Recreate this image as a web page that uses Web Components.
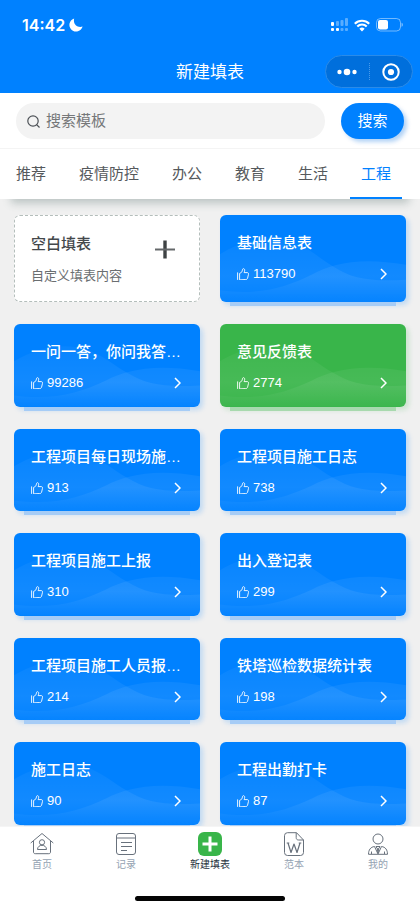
<!DOCTYPE html>
<html lang="zh-CN">
<head>
<meta charset="utf-8">
<meta name="viewport" content="width=device-width, initial-scale=1">
<title>新建填表</title>
<style>
  body { margin: 0; font-family: "Liberation Sans", "Noto Sans CJK SC", sans-serif; background: #f0f0f0; }
</style>
</head>
<body>
<form-app></form-app>
<script>
const base = `<style>
  *, *::before, *::after { box-sizing: border-box; }
  button { font: inherit; color: inherit; background: none; border: 0; padding: 0; margin: 0; cursor: pointer; }
  svg { display: block; }
</style>`;

function define(name, html, setup) {
  customElements.define(name, class extends HTMLElement {
    constructor() {
      super();
      const t = document.createElement('template');
      t.innerHTML = base + html;
      this.attachShadow({ mode: 'open' }).append(t.content.cloneNode(true));
    }
    connectedCallback() { if (setup) setup(this, this.shadowRoot); }
  });
}

define('status-bar', `<style>
  :host { display: flex; align-items: center; height: 50px; padding: 0 17px 0 22px; color: #fff; }
  time { font: 600 16px/20px Inter, "Liberation Sans", sans-serif; }
  .moon { margin-left: 4px; }
  .right { margin-left: auto; display: flex; align-items: center; gap: 6px; }
</style>
<time>14:42</time>
<svg class="moon" width="14" height="14" viewBox="0 0 14 14"><path fill="#fff" d="M5.200.5A6.700 6.700 0 1 0 13.600 8.600C9 10.500 3.600 6.400 5.200.5z"/></svg>
<div class="right">
  <svg width="17" height="14" viewBox="0 0 17 14" fill="#fff">
    <rect y="4" width="3" height="4" rx="1"/><rect y="10" width="3" height="3" rx="1"/><rect x="5" y="10" width="3" height="3" rx="1"/>
    <g opacity=".35"><rect x="5" y="3" width="3" height="5" rx="1"/><rect x="9.500" y="2" width="3" height="6" rx="1"/><rect x="14" y="0" width="3" height="8" rx="1"/><rect x="9.500" y="10" width="3" height="3" rx="1"/><rect x="14" y="10" width="3" height="3" rx="1"/></g>
  </svg>
  <svg width="16" height="13" viewBox="0 0 16 13" fill="none" stroke="#fff" stroke-width="2.1"><path d="M.8 4.700a10.300 10.300 0 0 1 14.400 0M3.300 7.500a6.600 6.600 0 0 1 9.400 0"/><path fill="#fff" stroke="none" d="M5.400 9.700a3.800 3.800 0 0 1 5.200 0L8 12.500z"/></svg>
  <svg width="27" height="14" viewBox="0 0 27 14"><rect x=".5" y=".5" width="24" height="12.500" rx="4" fill="none" stroke="#fff" stroke-opacity=".45"/><rect x="2" y="2" width="10" height="9.500" rx="2" fill="#fff"/><path d="M25.600 4.700v4c1.500-.6 1.500-3.400 0-4z" fill="#fff" fill-opacity=".6"/></svg>
</div>`);

define('title-bar', `<style>
  :host { display: grid; grid-template-columns: 1fr auto 1fr; align-items: center; height: 43px; padding: 0 7px; color: #fff; }
  h1 { grid-column: 2; margin: 0; padding-top: 2px; font-size: 17px; line-height: 24px; font-weight: 400; }
  .capsule { justify-self: end; display: flex; align-items: center; width: 88px; height: 33px; border: 1px solid #2b8be8; border-radius: 17px; background: #006fdc; }
  .capsule button { flex: 1; height: 24px; display: flex; align-items: center; justify-content: center; }
  .capsule button + button { border-left: 1px dotted #4a9bea; height: 17px; }
</style>
<h1><slot></slot></h1>
<div class="capsule">
  <button type="button" aria-label="更多"><svg width="20" height="8" viewBox="0 0 20 8" fill="#fff"><circle cx="2.500" cy="4" r="2.200"/><circle cx="10" cy="4" r="3.300"/><circle cx="17.500" cy="4" r="2.200"/></svg></button>
  <button type="button" aria-label="关闭"><svg width="18" height="18" viewBox="0 0 18 18"><circle cx="9" cy="9" r="7.700" fill="none" stroke="#fff" stroke-width="2"/><circle cx="9" cy="9" r="3.100" fill="#fff"/></svg></button>
</div>`);

define('search-bar', `<style>
  :host { display: block; background: #fff; border-bottom: 1px solid #f4f4f4; }
  form { display: flex; gap: 16px; padding: 10px 16px 9px; margin: 0; }
  label { flex: 1; min-width: 0; display: flex; align-items: center; gap: 6px; height: 36px; padding: 0 11px; border-radius: 18px; background: #f3f3f3; }
  input { flex: 1; min-width: 0; font: inherit; font-size: 15px; line-height: 20px; color: #333; border: 0; padding: 0; outline: 0; background: none; }
  input::placeholder { color: #757779; opacity: 1; }
  button { width: 63px; height: 36px; border-radius: 18px; background: #0081ff; color: #fff; font-size: 15px; line-height: 20px; box-shadow: 3px 3px 4px rgba(0,110,225,.3); }
</style>
<form onsubmit="return false">
  <label><svg width="13" height="13" viewBox="0 0 13 13" fill="none" stroke="#4c5156" stroke-width="1.200"><circle cx="6" cy="6" r="5.200"/><path d="M9.600 9.600l2.900 2.900"/></svg>
  <input type="text" placeholder="搜索模板" aria-label="搜索模板"></label>
  <button type="submit">搜索</button>
</form>`);

define('tab-strip', `<style>
  :host { display: block; position: relative; z-index: 1; background: #fff; }
  :host::after { content: ""; display: block; position: absolute; z-index: -1; inset: auto 12px 0; height: 10px; box-shadow: 0 3px 8px 1px rgba(70,100,95,.32); }
  nav { display: flex; gap: 11px; padding: 0 5px; background: #fff; overflow: hidden; }
</style><nav role="tablist" aria-label="分类"><slot></slot></nav>`);

define('tab-item', `<style>
  :host { display: block; flex: none; }
  button { display: block; height: 50px; padding: 2px 11px 0; border-bottom: 2px solid transparent; font-size: 15px; line-height: 20px; color: #55595c; }
  :host([active]) button { color: #0081ff; border-color: #0081ff; }
</style><button type="button" role="tab"><slot></slot></button>`,
(el, root) => root.querySelector('button').setAttribute('aria-selected', el.hasAttribute('active')));

define('blank-card', `<style>
  :host { display: block; min-width: 0; }
  button { display: flex; align-items: center; justify-content: space-between; width: 100%; height: 100%; min-height: 87px; padding: 0 24px 0 16px; text-align: left; background: #fff; border: 1px dashed #b4bebb; border-radius: 6px; }
  .text { display: flex; flex-direction: column; gap: 11px; align-self: start; padding-top: 17px; }
  strong { font-size: 15px; line-height: 22px; font-weight: 500; color: #44484b; }
  small { font-size: 13px; line-height: 20px; color: #6a6e71; }
  svg { align-self: start; margin-top: 24px; }
</style>
<button type="button"><span class="text"><strong>空白填表</strong><small>自定义填表内容</small></span>
<svg width="20" height="19" viewBox="0 0 20 19"><path d="M10 .5v18" stroke="#3e4244" stroke-width="3.400"/><path d="M0 9.500h20" stroke="#65686a" stroke-width="2"/></svg></button>`);

define('form-card', `<style>
  :host { --fill: #0081ff; --edge: #a6ccf6; --glow: rgba(0,129,255,.2); display: block; min-width: 0; }
  :host([green]) { --fill: #39b54a; --edge: #a8d9ae; --glow: rgba(57,181,74,.2); }
  button { position: relative; display: flex; flex-direction: column; gap: 9px; width: 100%; height: 100%; min-height: 82px; padding: 16px 17px 13px; text-align: left; color: #fff; background: var(--fill); border-radius: 6px; box-shadow: 0 14px 0 -10px var(--edge), 3px 3px 5px var(--glow); }
  .wave { position: absolute; inset: 0; width: 100%; height: 100%; border-radius: 6px; }
  .name { position: relative; width: 100%; font-size: 15px; line-height: 24px; font-weight: 500; white-space: nowrap; overflow: hidden; text-overflow: ellipsis; }
  .meta { position: relative; display: flex; align-items: center; gap: 4px; width: 100%; font-size: 13px; line-height: 20px; }
  .arrow { margin: 0 2px 0 auto; }
</style>
<button type="button">
  <svg class="wave" viewBox="0 0 186 82" preserveAspectRatio="none">
    <defs><linearGradient id="w" gradientUnits="userSpaceOnUse" x1="0" y1="22" x2="0" y2="82"><stop offset="0" stop-color="#fff" stop-opacity=".03"/><stop offset=".6" stop-color="#fff" stop-opacity=".07"/><stop offset="1" stop-color="#fff" stop-opacity=".01"/></linearGradient></defs>
    <g fill="url(#w)"><path d="M0 37C22 24 48 18 72 25C88 30 98 40 114 49C132 60 150 63 186 61V82H0z"/><path d="M0 71C40 76 66 68 92 56C112 46 140 39 186 47V82H0z"/></g>
  </svg>
  <span class="name"><slot></slot></span>
  <span class="meta">
    <svg width="12" height="12" viewBox="0 0 12 12" fill="none" stroke="#fff" stroke-width=".9" stroke-linejoin="round" stroke-linecap="round"><path d="M.6 4.800v6.700M2.600 11.500V5.400C4.500 5 5.300 3.300 5.500 1.600c.2-1.500 2.200-1.200 2.200.6 0 .9-.3 1.700-.6 2.400h3c1.100 0 1.600.7 1.400 1.700l-.9 3.800c-.2.900-.7 1.400-1.600 1.400z"/></svg>
    <span class="count"></span>
    <svg class="arrow" width="7" height="12" viewBox="0 0 7 12" fill="none" stroke="#fff" stroke-width="1.500"><path d="M1 1l5 5-5 5"/></svg>
  </span>
</button>`, (el, root) => { root.querySelector('.count').textContent = el.getAttribute('likes'); });

define('card-grid', `<style>
  :host { flex: 1; display: grid; grid-template-columns: repeat(2, minmax(0, 1fr)); grid-template-rows: auto; grid-auto-rows: 1fr; gap: 22px 20px; padding: 16px 14px 1px; }
</style><slot></slot>`);

const icons = {
  home: '<path d="M.7 11L12 1.500 23.300 11M3.500 9V20c0 1 .6 1.700 1.700 1.700h13.600c1.100 0 1.700-.7 1.700-1.700V9"/><circle cx="12" cy="10.300" r="2.600"/><path d="M7.500 17.500c0-5.600 9-5.600 9 0z"/>',
  record: '<rect x="2.500" y="1.500" width="19" height="21" rx="2.500"/><path d="M2.500 6h19M7 10.500h11M7 14.500h11M7 18.500h6"/>',
  add: '<rect x="0" y="0" width="24" height="24" rx="6" fill="#39b54a" stroke="none"/><path d="M12 4.500v15M4.500 12h15" stroke="#fff" stroke-width="3"/>',
  template: '<path d="M14.500.7H5.500a3 3 0 0 0-3 3V20.500a3 3 0 0 0 3 3h13a3 3 0 0 0 3-3V8zM14.200.7V5.500c0 1.700.8 2.500 2.500 2.500h4.800"/><path d="M6 11l3 9.500 3-8.500 3 8.500 3-9.500M4.700 11h2.600M16.700 11h2.600" stroke-width="1.200"/>',
  user: '<circle cx="12" cy="7" r="5"/><path d="M8.500 14.500C4.500 15 2.500 18 2.500 22.300h19c0-4.300-2-7.300-6-7.800M8.500 14.500l3.500 7.500 3.500-7.500M10 14.500h4l-1.300 2.200h-1.400zM11.300 16.700L12 21l.7-4.300M5.500 19.500v2.500M18.500 19.500v2.500"/>'
};

define('nav-item', `<style>
  :host { display: block; flex: 1; }
  a { display: flex; flex-direction: column; align-items: center; gap: 2px; text-decoration: none; font-size: 10px; line-height: 14px; color: #94a2b2; }
  :host([active]) a { color: #26313c; }
</style><a href="#"><svg width="24" height="24" viewBox="0 0 24 24" fill="none" stroke="#68717c" stroke-width="1" stroke-linejoin="round"></svg><span><slot></slot></span></a>`,
(el, root) => {
  root.querySelector('svg').innerHTML = icons[el.getAttribute('icon')];
  if (el.hasAttribute('active')) root.querySelector('a').setAttribute('aria-current', 'page');
});

define('bottom-nav', `<style>
  :host { display: flex; flex-direction: column; justify-content: space-between; position: relative; z-index: 2; height: 83px; padding: 5px 0 8px; background: #fff; border-top: 1px solid #f5f5f5; }
  nav { display: flex; }
  .handle { align-self: center; width: 150px; height: 5px; border-radius: 3px; background: #050505; }
</style><nav aria-label="主导航"><slot></slot></nav><div class="handle"></div>`);

define('form-app', `<style>
  :host { display: flex; flex-direction: column; min-height: 100vh; background: #f0f0f0; }
  header { background: #0081ff; }
</style>
<header><status-bar></status-bar><title-bar>新建填表</title-bar></header>
<search-bar></search-bar>
<tab-strip>
  <tab-item>推荐</tab-item><tab-item>疫情防控</tab-item><tab-item>办公</tab-item><tab-item>教育</tab-item><tab-item>生活</tab-item><tab-item active>工程</tab-item>
</tab-strip>
<card-grid>
  <blank-card></blank-card>
  <form-card likes="113790">基础信息表</form-card>
  <form-card likes="99286">一问一答，你问我答模板</form-card>
  <form-card likes="2774" green>意见反馈表</form-card>
  <form-card likes="913">工程项目每日现场施工表</form-card>
  <form-card likes="738">工程项目施工日志</form-card>
  <form-card likes="310">工程项目施工上报</form-card>
  <form-card likes="299">出入登记表</form-card>
  <form-card likes="214">工程项目施工人员报备表</form-card>
  <form-card likes="198">铁塔巡检数据统计表</form-card>
  <form-card likes="90">施工日志</form-card>
  <form-card likes="87">工程出勤打卡</form-card>
</card-grid>
<bottom-nav>
  <nav-item icon="home">首页</nav-item><nav-item icon="record">记录</nav-item><nav-item icon="add" active>新建填表</nav-item><nav-item icon="template">范本</nav-item><nav-item icon="user">我的</nav-item>
</bottom-nav>`);
</script>
</body>
</html>
